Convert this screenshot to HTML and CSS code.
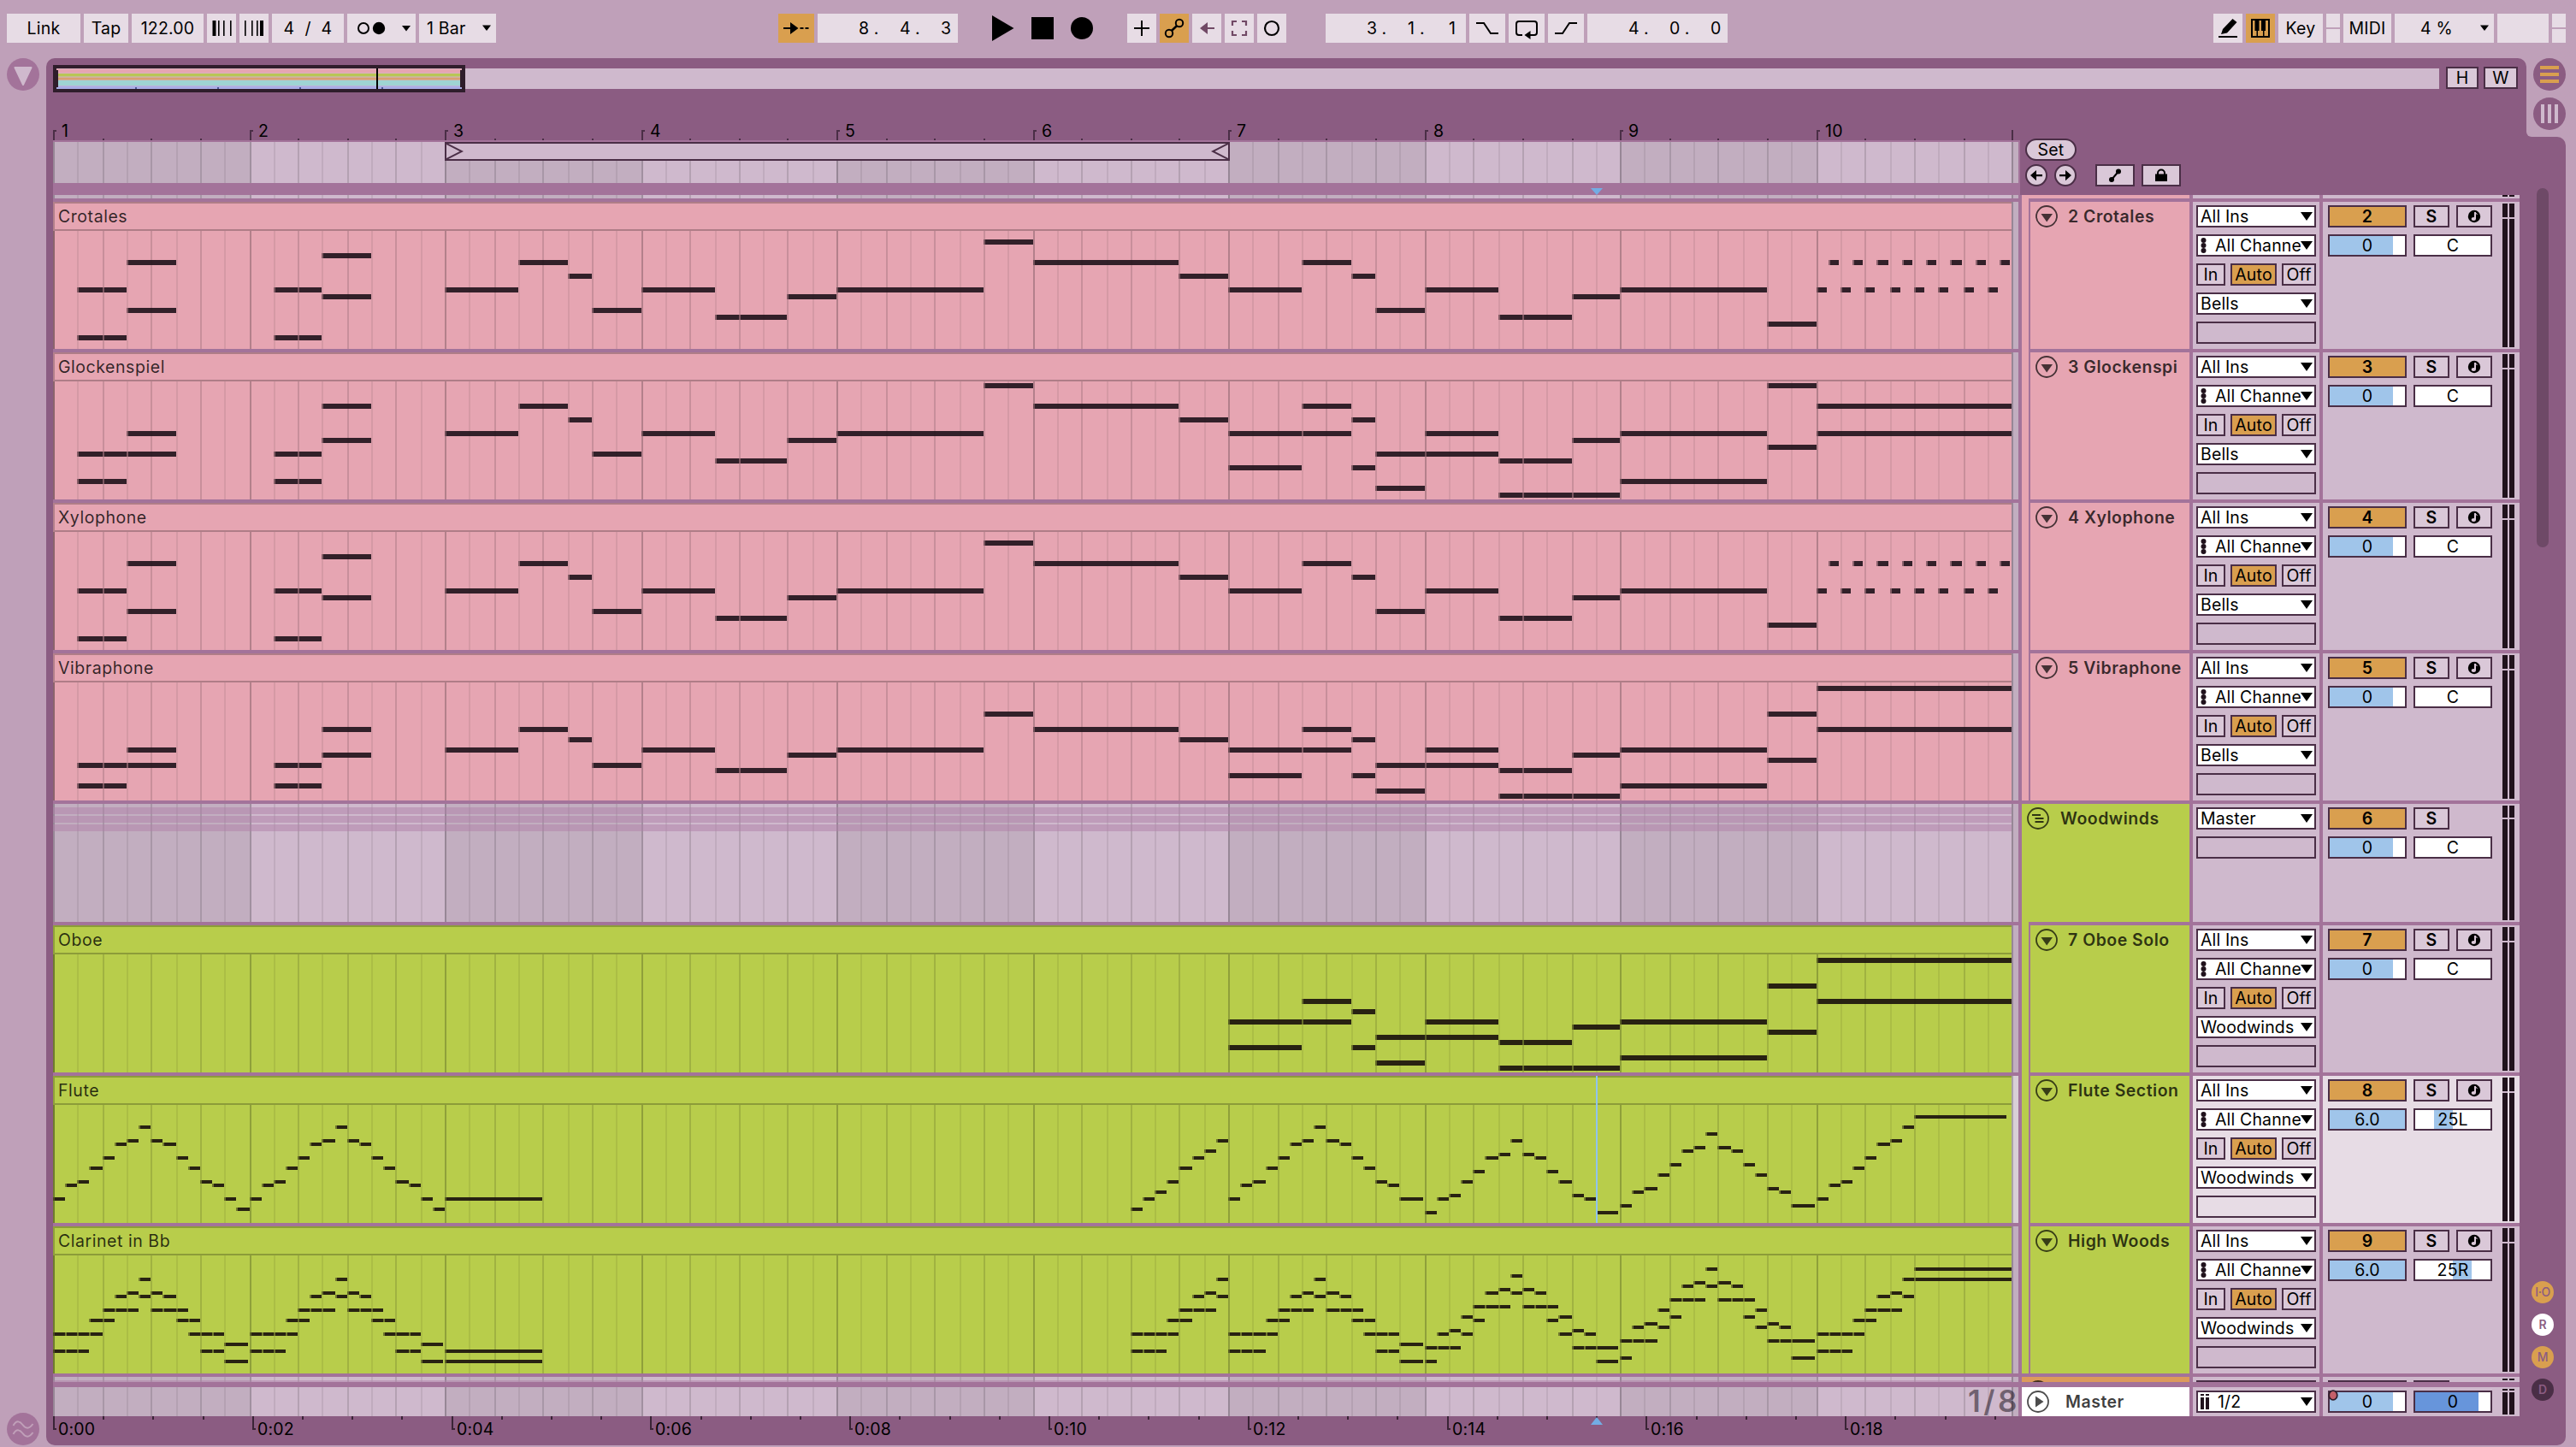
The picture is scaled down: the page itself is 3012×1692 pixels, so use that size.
FILE: index.html
```html
<!DOCTYPE html>
<html lang="en">
<head>
<meta charset="utf-8">
<title>Arrangement</title>
<link rel="stylesheet" href="styles.css">
</head>
<body>
<header class="toolbar">
  <div class="group">
    <div class="cell w86">Link</div>
    <div class="cell w52">Tap</div>
    <div class="cell w84">122.00</div>
    <div class="cell w34"><svg width="34" height="34"><path d="M6.500 8h4v18h-4zM13 8h1.600v18H13zM19 8h1.600v18H19zM27 8h1.600v18H27z"/></svg></div>
    <div class="cell w34"><svg width="34" height="34"><path d="M6 8h1.600v18H6zM14 8h1.600v18H14zM20 8h1.600v18H20zM24 8h4v18h-4z"/></svg></div>
    <div class="cell w84 sig"><span>4</span><span>/</span><span>4</span></div>
    <div class="cell w80"><svg width="80" height="34"><circle cx="19" cy="17" r="6" fill="none" stroke="#000" stroke-width="2"/><circle cx="37" cy="17" r="7.200"/><path d="M64 14h10l-5 6.500z"/></svg></div>
    <div class="cell w90 quant"><span>1 Bar</span><svg width="10" height="8"><path d="M0 .5h10L5 7z"/></svg></div>
  </div>
  <div class="group transport">
    <div class="cell on w42"><svg width="42" height="34"><path d="M6 16h8v-6l9.500 7-9.500 7v-6H6zM25.500 16h4v2h-4zM31.500 16h4v2h-4z"/></svg></div>
    <div class="cell w164 pos"><span>8.</span><span>4.</span><span>3</span></div>
    <svg class="play" width="118" height="34"><path d="M0 2v30l25.500-15z"/><path d="M46 4h26v26H46z"/><circle cx="105" cy="17" r="13"/></svg>
    <div class="group tools">
      <div class="cell w34"><svg width="34" height="34"><path d="M8 16h18v2H8zM16 8h2v18h-2z"/></svg></div>
      <div class="cell on w34"><svg width="34" height="34" fill="none" stroke="#000" stroke-width="2"><circle cx="11" cy="23" r="4.200"/><circle cx="23" cy="11" r="4.200"/><path d="M13.800 20l6.400-6" stroke-width="2.500"/></svg></div>
      <div class="cell w34"><svg width="34" height="34" fill="#714965"><path d="M9 17l9-7v6h8v2h-8v6z"/></svg></div>
      <div class="cell w34"><svg width="34" height="34" fill="none" stroke="#714965" stroke-width="2.200"><path d="M9 14V9h5M20 9h5v5M25 20v5h-5M14 25H9v-5"/></svg></div>
      <div class="cell w34"><svg width="34" height="34"><circle cx="17" cy="17" r="8" fill="none" stroke="#000" stroke-width="2.200"/></svg></div>
    </div>
    <div class="group loop">
      <div class="cell w164 pos"><span>3.</span><span>1.</span><span>1</span></div>
      <div class="cell w42"><svg width="42" height="34" fill="none" stroke="#000" stroke-width="2"><path d="M8 11h9l8 12h9"/></svg></div>
      <div class="cell w42"><svg width="42" height="34"><path d="M16 25h-4q-3 0-3-3V12q0-3 3-3h18q3 0 3 3v10q0 3-3 3h-5" fill="none" stroke="#000" stroke-width="2"/><path d="M18.500 25l7-5v10z"/></svg></div>
      <div class="cell w42"><svg width="42" height="34" fill="none" stroke="#000" stroke-width="2"><path d="M8 23h9l8-12h9"/></svg></div>
      <div class="cell w164 pos"><span>4.</span><span>0.</span><span>0</span></div>
    </div>
  </div>
  <div class="group status">
    <div class="cell w34"><svg width="34" height="34"><path d="M6 26h22v2H6zM9 24l2-6L22.500 6l5 4L16 22.500z"/></svg></div>
    <div class="cell on w34"><svg width="34" height="34"><rect x="7" y="7" width="20" height="20" fill="none" stroke="#000" stroke-width="2"/><path d="M10.500 7h5v13h-5zM18 7h5v13h-5zM12.500 20H14v7h-1.500zM20 20h1.500v7H20z"/></svg></div>
    <div class="cell w52">Key</div>
    <div class="leds"><i></i><i></i></div>
    <div class="cell w56">MIDI</div>
    <div class="cell w116 cpu"><span>4 %</span><svg width="10" height="8"><path d="M0 .5h10L5 7z"/></svg></div>
    <div class="cell w60"></div>
    <div class="leds"><i></i><i></i></div>
  </div>
</header>

<main class="workspace">
  <aside class="rail">
    <svg width="38" height="38"><circle cx="19" cy="19" r="19" fill="#a3739a"/><path d="M9.500 11h19L19 31z" fill="#cfb9cd" stroke="#cfb9cd" stroke-width="2" stroke-linejoin="round"/></svg>
    <svg width="38" height="38"><circle cx="19" cy="19" r="19" fill="#a3739a"/><path d="M7.500 15c4-7 8-5 11-1s7 6 12-1M7.500 25c4-7 8-5 11-1s7 6 12-1" fill="none" stroke="#c0a0b9" stroke-width="2"/></svg>
  </aside>

  <section class="panel">
    <div class="overview-row">
      <div class="overview">
        <div class="viewport"><svg width="482" height="32">
          <path d="M4 4h474v24H4z" fill="#cfb9cd"/>
          <path d="M4 4.500h474v5H4z" fill="#e6a5b2"/><path d="M4 10h474v3.500H4z" fill="#b9c655"/><path d="M4 14.500h474v3H4z" fill="#d9a172"/><path d="M4 18h474v6H4z" fill="#9fd4d3"/><path d="M4 24.500h474V28H4z" fill="#a9aee6"/>
          <path d="M96 26h2v2h-2zM192 26h2v2h-2zM288 26h2v2h-2zM384 26h2v2h-2z" fill="#4c5794"/>
          <path d="M378 4h2v24h-2z"/>
          <path d="M0 0h482v32H0zM4 4v2h2v20H4v2h474v-2h-2V6h2V4z" fill="#2f1d2b" fill-rule="evenodd"/>
        </svg></div>
      </div>
      <div class="btn h">H</div>
      <div class="btn w">W</div>
    </div>
    <div class="head">
      <div class="head-left">
        <div class="ruler" id="ruler"></div>
        <div class="scrub" id="scrub">
          <div class="brace"><svg width="20" height="18"><path d="M0 0l18 9-18 9" fill="none" stroke="#4a2e46" stroke-width="2"/></svg><svg width="20" height="18"><path d="M20 0L2 9l18 9" fill="none" stroke="#4a2e46" stroke-width="2"/></svg></div>
        </div>
        <div class="marker-row"><svg class="marker" width="14" height="8"><path d="M0 0h14L7 8z"/></svg></div>
      </div>
      <div class="locators">
        <div class="btn set">Set</div>
        <div class="loc-row">
          <div class="btn round"><svg width="22" height="22"><path d="M4 11l7-6v5h7v2.200h-7v5z"/></svg></div>
          <div class="btn round next"><svg width="22" height="22"><path d="M18 11l-7-6v5H4v2.200h7v5z"/></svg></div>
          <div class="btn sq"><svg width="42" height="22"><circle cx="17" cy="16" r="3"/><circle cx="25" cy="6.500" r="3"/><path d="M17 16l8-9.500" stroke="#000" stroke-width="2"/></svg></div>
          <div class="btn sq"><svg width="42" height="22"><path d="M14 9.500h14V18H14z"/><path d="M17 10V8.500a4 4 0 0 1 8 0V10" fill="none" stroke="#000" stroke-width="2"/></svg></div>
        </div>
      </div>
    </div>
    <div class="tracks" id="tracks"></div>
    <div class="time" id="time"></div>
  </section>

  <aside class="side">
    <div class="views"><div class="views-in">
      <svg width="38" height="38"><circle cx="19" cy="19" r="19" fill="#8b5c82"/><path d="M8 9h22v4H8zM8 17h22v4H8zM8 25h22v4H8z" fill="#d99f4f"/></svg>
      <svg width="38" height="38"><circle cx="19" cy="19" r="19" fill="#8b5c82"/><path d="M9 8h4v22H9zM17 8h4v22h-4zM25 8h4v22h-4z" fill="#cfb9cd"/></svg>
    </div></div>
    <div class="side-body">
      <div class="scrollbar"></div>
      <div class="toggles">
        <span class="amber">I·O</span><span class="white">R</span><span class="amber">M</span><span class="dark">D</span>
      </div>
    </div>
  </aside>
</main>
<script src="app.js"></script>
</body>
</html>
```
FILE: styles.css
```css
* { box-sizing: border-box; }
body {
  margin: 0; width: 3012px; height: 1692px; overflow: hidden;
  background: #bfa0b9; color: #000;
  font: 430 19.500px/22px Inter, "Liberation Sans", sans-serif;
  letter-spacing: .2px;
  display: flex; flex-direction: column; white-space: nowrap;
}
svg { display: block; flex: none; }

/* toolbar */
.toolbar { height: 68px; padding: 16px 12px 0 8px; display: flex; flex: none; }
.group { display: flex; gap: 4px; height: 34px; }
.cell { height: 34px; background: #e7dce5; display: flex; align-items: center; justify-content: center; flex: none; }
.on { background: #d99f4f; }
.w34 { width: 34px; } .w42 { width: 42px; } .w52 { width: 52px; } .w56 { width: 56px; } .w60 { width: 60px; }
.w80 { width: 80px; } .w84 { width: 84px; } .w86 { width: 86px; } .w90 { width: 90px; } .w116 { width: 116px; } .w164 { width: 164px; }
.sig { gap: 12px; }
.quant { justify-content: space-between; padding: 0 6px 0 9px; }
.cpu { justify-content: space-between; padding: 0 6px 0 30px; }
.transport { margin-left: 330px; }
.pos { justify-content: flex-end; padding-right: 9px; }
.pos span { width: 48px; letter-spacing: 6px; }
.pos span:last-child { width: 11px; letter-spacing: 0; }
.play { margin-left: 36px; margin-right: 36px; }
.loop { margin-left: 42px; }
.status { margin-left: auto; }
.leds { width: 16px; display: flex; flex-direction: column; gap: 2px; }
.leds i { flex: 1; background: #e7dce5; }

/* frame */
.workspace { display: flex; height: 1622px; }
.rail { width: 54px; padding-left: 8px; display: flex; flex-direction: column; justify-content: space-between; }
.panel { position: relative; width: 2900px; background: #8b5c82; border-radius: 10px 10px 0 10px; padding-left: 8px; }
.side { width: 46px; display: flex; flex-direction: column; }
.views { height: 92px; background: linear-gradient(#bfa0b9 60px, #8b5c82 60px); }
.views-in { background: #bfa0b9; height: 92px; border-radius: 0 0 0 6px; padding-left: 8px; display: flex; flex-direction: column; gap: 8px; }
.side-body { flex: 1; background: #8b5c82; border-radius: 0 10px 10px 0; padding: 60px 0 52px; display: flex; flex-direction: column; justify-content: space-between; align-items: center; }
.scrollbar { width: 14px; height: 420px; border-radius: 7px; background: #6e4967; margin-left: -8px; }
.toggles { display: flex; flex-direction: column; gap: 12px; margin-left: -8px; }
.toggles span { width: 26px; height: 26px; border-radius: 50%; font-size: 14px; line-height: 26px; text-align: center; color: #8b5c82; font-weight: 600; letter-spacing: 0; }
.toggles .amber { background: #d99f4f; letter-spacing: -.5px; font-weight: 500; }
.toggles .dark { background: #4a2e46; }
.toggles .white { background: #fff; }

.overview-row { height: 40px; padding-top: 8px; display: flex; }
.overview { margin-top: 4px; height: 24px; width: 2790px; background: #cfb9cd; }
.viewport { margin-top: -4px; }
.btn { height: 26px; border: 2px solid #4a2e46; background: #dac8d8; display: flex; align-items: center; justify-content: center; flex: none; }
.btn.h { width: 38px; margin: 2px 6px 0 8px; }
.btn.w { width: 40px; margin-top: 2px; }

.head { height: 120px; display: flex; }
.head-left { width: 2300px; }
.ruler { height: 56px; }
.scrub { height: 50px; border-top: 2px solid #a3739a; border-right: 2px solid #a3739a; display: grid; background: #cfb9cd; }
.scrub > * { grid-area: 1 / 1; }
.brace { margin-left: 458px; width: 918px; height: 22px; background: #cfb9cd; border: 2px solid #4a2e46; z-index: 1; display: flex; justify-content: space-between; }
.marker-row { height: 14px; background: #a3739a; padding: 6px 0 0 1798px; }
.marker { fill: #73ade4; }
.locators { padding: 54px 0 0 6px; }
.set { width: 60px; border-radius: 13px; }
.loc-row { display: flex; margin-top: 4px; }
.round { width: 26px; border-radius: 50%; }
.next { margin: 0 22px 0 8px; }
.sq { width: 46px; margin-right: 8px; }

/* track rows */
.tracks { width: 2884px; height: 1428px; background: #a3739a; display: flex; flex-direction: column; gap: 4px; }
.row { display: flex; gap: 4px; height: 172px; flex: none; }
.row.group-row { height: 138px; }
.row.cut-top { height: 4px; overflow: hidden; }
.row.cut-bottom { height: 6px; overflow: hidden; margin-bottom: 2px; }
.row.master { height: 34px; }
.lane { width: 2298px; background: #cfb9cd; display: grid; }
.lane > * { grid-area: 1 / 1; }
.selected .lane, .selected .io, .selected .mix { background: #e7dce5; }
.clip { width: 2290px; height: 100%; background: var(--c); color: rgba(0,0,0,.78); z-index: 1; border-left: 2px solid rgba(0,0,0,.22); }
.clip-title { height: 34px; border: solid rgba(0,0,0,.24); border-width: 2px 0; padding-left: 4px; line-height: 30px; letter-spacing: .55px; }
.clip svg { margin-left: -2px; }
.notes { fill: #1e1219; fill-opacity: .9; }
.green .notes { fill: #180f0c; }
.pink { --c: #e6a5b2; } .green { --c: #b8cd4b; } .orange { --c: #dc9a5c; } .plain { --c: #fff; }
.stripes { height: 32px; width: 2290px; z-index: 1; padding-top: 4px; display: flex; flex-direction: column; gap: 2px; }
.stripes i { height: 8px; background: rgba(176,128,168,.5); }
.caret { width: 2px; margin-left: 1804px; background: #8fc4ee; z-index: 2; }
.quantum { justify-self: end; margin-right: -2px; z-index: 1; font-size: 35px; line-height: 32px; font-weight: 600; letter-spacing: 3.500px; color: rgba(30,20,30,.55); }

.name { width: 196px; background: var(--c); display: flex; gap: 13px; padding: 4px 0 0 6px; font-weight: 570; letter-spacing: .5px; color: rgba(0,0,0,.76); overflow: hidden; }
.name span { line-height: 26px; }
.master .name { gap: 19px; }
.child { background: none; padding: 0; gap: 2px; overflow: visible; }
.child .strip { width: 8px; background: var(--c); margin-top: -4px; }
.child .name-in { width: 186px; background: var(--c); display: flex; gap: 12px; padding: 4px 0 0 6px; overflow: hidden; }

.io { width: 148px; background: #cfb9cd; padding: 4px; display: flex; flex-direction: column; gap: 8px; overflow: hidden; }
.box { height: 26px; border: 2px solid #4a2e46; flex: none; display: flex; align-items: center; }
.menu { background: #fff; padding: 0 2px 0 3px; justify-content: space-between; letter-spacing: .15px; }
.menu .label { overflow: hidden; flex: 1; min-width: 0; }
.menu .chan { margin-right: 10px; }
.mon { display: flex; gap: 6px; }
.mon .box { justify-content: center; background: #dac8d8; }
.mon .box:nth-child(1) { width: 34px; }
.mon .box:nth-child(2) { width: 54px; background: #d99f4f; }
.mon .box:nth-child(3) { width: 40px; }

.mix { width: 230px; background: #cfb9cd; padding: 0 6px; display: flex; justify-content: space-between; }
.controls { display: grid; grid-template-columns: 92px 42px 42px; grid-auto-rows: 26px; gap: 8px; padding-top: 4px; height: 100%; overflow: hidden; align-content: start; }
.controls .box { justify-content: center; }
.num { background: #d99f4f; font-weight: 600; }
.small { background: #dac8d8; font-weight: 600; }
.wide { grid-column: 2 / 4; }
.first { grid-column: 1; }
.meter { width: 14px; display: flex; gap: 2px; padding: 2px 0; }
.meter i { width: 6px; background: linear-gradient(#20121c 16px, #cfb9cd 16px 18px, #20121c 18px); }
.group-row .meter i { background: linear-gradient(#20121c 14px, #cfb9cd 14px 16px, #20121c 16px); }
.master .meter i { background: linear-gradient(#20121c 2px, #cfb9cd 2px 4px, #20121c 4px); }
.cut-top .meter { padding-top: 0; }
.arm-dot { position: absolute; left: 2668px; top: 1557px; }
.time { height: 34px; }
```
FILE: app.js
```js
const BAR = 114.519, BARS = 10;
// Horizontal position in a lane, snapped to the 2px grid.
const gx = eighth => 2 * Math.round(31 + eighth * BAR / 8) - 62;
const tri = '<svg width="14" height="10"><path d="M0 0h14L7 10z"/></svg>';

function grid(height, shade) {
  let s = '';
  if (shade) for (let b = 0; b <= BARS; b += 2) {
    const end = b === BARS ? 2298 : gx(b * 8 + 8);
    s += `<rect x="${gx(b * 8)}" width="${end - gx(b * 8)}" height="${height}" fill-opacity=".06"/>`;
  }
  for (let e = 0; e <= BARS * 8; e++) {
    const o = e % 8 === 0 ? .22 : e % 2 === 0 ? .13 : .07;
    s += `<rect x="${gx(e)}" width="2" height="${height}" fill-opacity="${o}"/>`;
  }
  return s;
}

const add = (list, y, ...spans) => spans.forEach(([a, b]) => list.push([a, b, y]));

// Shared phrase from bar 3 to bar 9; `m` maps a scale step to its y offset.
function phrase(list, m, from) {
  const seq = [[16,19,3],[19,21,-1],[21,22,1],[22,24,6],[24,27,3],[27,28,7],[28,30,7],[30,32,4],[32,38,3],[38,40,-4],[40,46,-1],[46,48,1],
    [48,51,3],[51,53,-1],[53,54,1],[54,56,6],[56,59,3],[59,60,7],[60,62,7],[62,64,4],[64,70,3]];
  seq.filter(n => n[0] >= from).forEach(([a, b, k]) => list.push([a, b, m(k)]));
}
function crotales() {
  const n = [];
  add(n, 100, [1,2],[2,3],[9,10],[10,11]);
  add(n, 156, [1,2],[2,3],[9,10],[10,11]);
  add(n, 68, [3,5]); add(n, 124, [3,5]); add(n, 60, [11,13]); add(n, 108, [11,13]);
  phrase(n, k => 76 + 8 * k, 16);
  add(n, 140, [70,72]);
  for (let i = 0; i < 8; i++) { add(n, 100, [72 + i, 72.43 + i]); add(n, 68, [72.5 + i, 72.93 + i]); }
  return n;
}
function glock(m, last, from) {
  const n = [];
  if (!from) {
    add(n, m(92), [3,5]); add(n, m(116), [1,2],[2,3],[3,5],[9,10],[10,11]);
    add(n, m(148), [1,2],[2,3],[9,10],[10,11]); add(n, m(60), [11,13]); add(n, m(100), [11,13]);
  }
  phrase(n, k => m(68 + 8 * k), from);
  add(n, m(92), [51,53]); add(n, m(132), [48,51],[53,54]); add(n, m(116), [56,59]);
  add(n, m(156), [54,56]); add(n, m(164), [59,60],[60,62],[62,64]);
  add(n, m(148), [64,70]); add(n, m(36), [70,72]); add(n, m(108), [70,72]);
  last.forEach(y => add(n, y, [72,80]));
  return n;
}
const same = y => y, squeeze = y => 164 - (164 - y) * .75;

// Sixteenth-note runs.
function run(list, start, ys) { ys.forEach((y, i) => list.push([(start + i) / 2, (start + i + 1) / 2, y])); }
function hold(list, start, len, y, trim = 2) { list.push([start / 2, (start + len) / 2, y, trim]); }
function flute() {
  const n = [], arch = [142,126,122,106,94,78,74,58,74,78,94,106,122,126];
  run(n, 0, [...arch, 142, 154]); run(n, 16, [...arch, 142, 154]); hold(n, 32, 8, 142, 0);
  run(n, 88, [154,142,134,122,106,94,86,74]);
  run(n, 96, arch); hold(n, 110, 2, 142);
  run(n, 112, [158,142,138,122,110,94,90,74,90,94,110,122,138,142]); hold(n, 126, 2, 158);
  run(n, 128, [150,134,130,114,102,86,82,66,82,86,102,114,130,134]); hold(n, 142, 2, 150);
  run(n, 144, arch.slice(0, 8)); hold(n, 152, 8, 46, 6);
  return n;
}
function clarinet() {
  const n = [];
  const put = (base, rows) => Object.entries(rows).forEach(([y, at]) => at.forEach(i => run(n, base + i, [+y])));
  const arch = { 124:[0,1,2,3,11,12,13], 144:[0,1,2,12,13], 108:[3,4,10,11], 96:[4,5,6,8,9,10], 80:[5,7,9], 76:[6,8], 60:[7] };
  [0, 16, 96].forEach(b => { put(b, arch); hold(n, b + 14, 2, 136); hold(n, b + 14, 2, 156); });
  hold(n, 32, 8, 144, 0); hold(n, 32, 8, 156, 0);
  const rise = { 124:[0,1,2,3], 144:[0,1,2], 108:[3,4], 96:[4,5,6], 80:[5,7], 76:[6], 60:[7] };
  put(88, rise); put(144, rise);
  put(112, { 156:[0], 140:[0,1,2,12,13], 124:[1,3,11,13], 120:[2,12], 104:[3,11], 108:[4,10], 92:[4,5,6,8,9,10], 76:[5,7,9], 72:[6,8], 56:[7] });
  hold(n, 126, 2, 140); hold(n, 126, 2, 156);
  put(128, { 152:[0], 132:[0,1,2,12,13], 116:[1,3,11,13], 112:[2,12], 96:[3,11], 104:[4,10], 84:[4,5,6,8,9,10], 68:[5,7,9], 64:[6,8], 48:[7] });
  hold(n, 142, 2, 132); hold(n, 142, 2, 152);
  hold(n, 152, 8, 60, 0); hold(n, 152, 8, 48, 0);
  return n;
}
function drawNotes(list, h) {
  return '<g class="notes">' + list.map(([a, b, y, trim = 0]) => {
    const x = gx(a), w = Math.min(gx(b) - trim, 2290) - x, top = y - 34;
    return `<rect x="${x}" y="${top}" width="2" height="${h}" opacity=".5"/><rect x="${x + 2}" y="${top}" width="${w - 2}" height="${h}"/>`;
  }).join('') + '</g>';
}

const ring = '<circle cx="13" cy="13" r="12" fill="none" stroke="#000" stroke-opacity=".7" stroke-width="1.800"/>';
const fold = `<svg width="26" height="26">${ring}<path d="M6.500 10h13.500l-6.800 9.500z" fill-opacity=".7"/></svg>`;
const bus = `<svg width="26" height="26">${ring}<path d="M6 9h10M9.500 13h10M9.500 17h10" stroke="#000" stroke-opacity=".75" stroke-width="1.800"/></svg>`;
const playIcon = `<svg width="26" height="26">${ring}<path d="M10 6.500v13l9.500-6.500z" fill-opacity=".7"/></svg>`;
const midi = '<svg class="chan" width="7" height="18" fill="#20121c"><circle cx="3.500" cy="3" r="3"/><circle cx="3.500" cy="9" r="3"/><circle cx="3.500" cy="15" r="3"/></svg>';
const pair = '<svg class="chan" width="10" height="18" fill="#20121c"><path d="M0 0h4v2H0zM0 4h4v14H0zM6 0h4v2H6zM6 4h4v14H6z"/></svg>';
const arm = '<svg width="16" height="16"><circle cx="8" cy="8" r="7.200"/><path d="M9 3v8" stroke="#dac8d8" stroke-width="2"/><ellipse cx="7.300" cy="11" rx="2.700" ry="2" fill="#dac8d8"/><path d="M9.500 3.500l2 2.500" stroke="#dac8d8" stroke-width="1"/></svg>';
const menu = (t, icon = '') => `<div class="box menu">${icon}<span class="label">${t}</span>${tri}</div>`;
const empty = '<div class="box"></div>';
const slider = (cls, text, a, b, color = '#a0c5ea') =>
  `<div class="box ${cls}" style="background:linear-gradient(90deg,#fff ${a}px,${color} ${a}px ${b}px,#fff ${b}px)">${text}</div>`;
const meter = '<div class="meter"><i></i><i></i></div>';

const tracks = [
  { clip: 'Crotales', name: '2 Crotales', out: 'Bells', c: 'pink', notes: crotales(), n: 2 },
  { clip: 'Glockenspiel', name: '3 Glockenspi', out: 'Bells', c: 'pink', notes: glock(same, [60, 92], 0), n: 3 },
  { clip: 'Xylophone', name: '4 Xylophone', out: 'Bells', c: 'pink', notes: crotales(), n: 4 },
  { clip: 'Vibraphone', name: '5 Vibraphone', out: 'Bells', c: 'pink', notes: glock(squeeze, [38, 86], 0), n: 5 },
  { bus: true, name: 'Woodwinds', c: 'green', n: 6 },
  { clip: 'Oboe', name: '7 Oboe Solo', out: 'Woodwinds', c: 'green', notes: glock(squeeze, [38, 86], 48), n: 7 },
  { clip: 'Flute', name: 'Flute Section', out: 'Woodwinds', c: 'green', notes: flute(), h: 4, n: 8, vol: '6.0', pan: '25L', selected: true },
  { clip: 'Clarinet in Bb', name: 'High Woods', out: 'Woodwinds', c: 'green', notes: clarinet(), h: 4, n: 9, vol: '6.0', pan: '25R' }
];
const panFill = { '25L': [22, 44], '25R': [44, 66] };

function row(t) {
  const height = t.bus ? 138 : 172;
  const vol = t.vol || '0', pan = t.pan || 'C', [pa, pb] = panFill[pan] || [0, 0];
  let lane = `<svg width="2298" height="${height}">${grid(height, true)}</svg>`;
  if (t.bus) lane += '<div class="stripes"><i></i><i></i><i></i></div>';
  else lane += `<div class="clip"><div class="clip-title">${t.clip}</div><svg width="2290" height="138">${grid(138, false)}${drawNotes(t.notes, t.h || 6)}</svg></div>`;
  if (t.selected) lane += '<div class="caret"></div>';
  const name = t.bus ? `<div class="name">${bus}<span>${t.name}</span></div>`
    : `<div class="name child"><div class="strip"></div><div class="name-in">${fold}<span>${t.name}</span></div></div>`;
  const io = t.bus ? menu('Master') + empty
    : menu('All Ins') + menu('All Channels', midi) + '<div class="mon"><div class="box">In</div><div class="box">Auto</div><div class="box">Off</div></div>' + menu(t.out) + empty;
  return `<div class="row ${t.c} ${t.bus ? 'group-row' : ''} ${t.selected ? 'selected' : ''}"><div class="lane">${lane}</div>${name}<div class="io">${io}</div>
    <div class="mix"><div class="controls"><div class="box num">${t.n}</div><div class="box small">S</div>${t.bus ? '' : `<div class="box small">${arm}</div>`}
    ${slider('first', vol, 0, vol === '0' ? 74 : 88)}${slider('wide', pan, pa, pb)}</div>${meter}</div></div>`;
}

const cutTop = `<div class="row cut-top pink"><div class="lane"><svg width="2298" height="4">${grid(4, true)}</svg></div><div class="name"></div><div class="io"></div><div class="mix"><div></div>${meter}</div></div>`;
const cutBottom = `<div class="row cut-bottom orange"><div class="lane"><svg width="2298" height="6">${grid(6, true)}</svg><div class="stripes"><i></i></div></div><div class="name">${bus}</div><div class="io">${empty}</div><div class="mix"><div class="controls"><div class="box"></div><div class="box"></div></div>${meter}</div></div>`;
const master = `<div class="row master plain"><div class="lane"><svg width="2298" height="34">${grid(34, true)}</svg><div class="quantum">1/8</div></div><div class="name">${playIcon}<span>Master</span></div><div class="io">${menu('1/2', pair)}</div>
  <div class="mix"><div class="controls">${slider('first', '0', 0, 74)}${slider('wide', '0', 0, 74, '#6795db')}</div>${meter}</div></div>`;
document.getElementById('tracks').innerHTML = cutTop + tracks.map(row).join('') + cutBottom + master +
  '<svg class="arm-dot" width="12" height="13"><ellipse cx="6" cy="6.500" rx="4.800" ry="5.300" fill="#c4606a" stroke="#2f1d2b" stroke-width="1.800"/></svg>';

// Rulers
let bars = '';
for (let q = 0; q <= 40; q++) {
  const x = gx(q * 2);
  if (q % 4) bars += `<path d="M${x} 54h2v2h-2z"/>`;
  else {
    bars += `<path d="M${x} 44h${q < 40 ? 4 : 2}v2h-${q < 40 ? 2 : 0}v10h-2z"/>`;
    if (q < 40) bars += `<text x="${x + 10}" y="52" fill="#000">${q / 4 + 1}</text>`;
  }
}
document.getElementById('ruler').innerHTML = `<svg width="2300" height="56" fill="#4a2e46">${bars}</svg>`;
document.getElementById('scrub').insertAdjacentHTML('afterbegin', `<svg width="2298" height="48">${grid(48, true)}</svg>`);
let time = '';
for (let i = 0; i < 40; i++) {
  const x = Math.round(i * 58.2);
  if (x > 2290) break;
  if (i % 4) time += `<path d="M${x} 0h2v4h-2z"/>`;
  else time += `<path d="M${x} 0h2v14h2v2h-4z"/><text x="${x + 6}" y="22" fill="#000">0:${String(i / 2).padStart(2, '0')}</text>`;
}
time += '<path d="M1798 10h14l-7-9z" fill="#73ade4"/>';
document.getElementById('time').innerHTML = `<svg width="2330" height="34" fill="#3a2436">${time}</svg>`;
```
